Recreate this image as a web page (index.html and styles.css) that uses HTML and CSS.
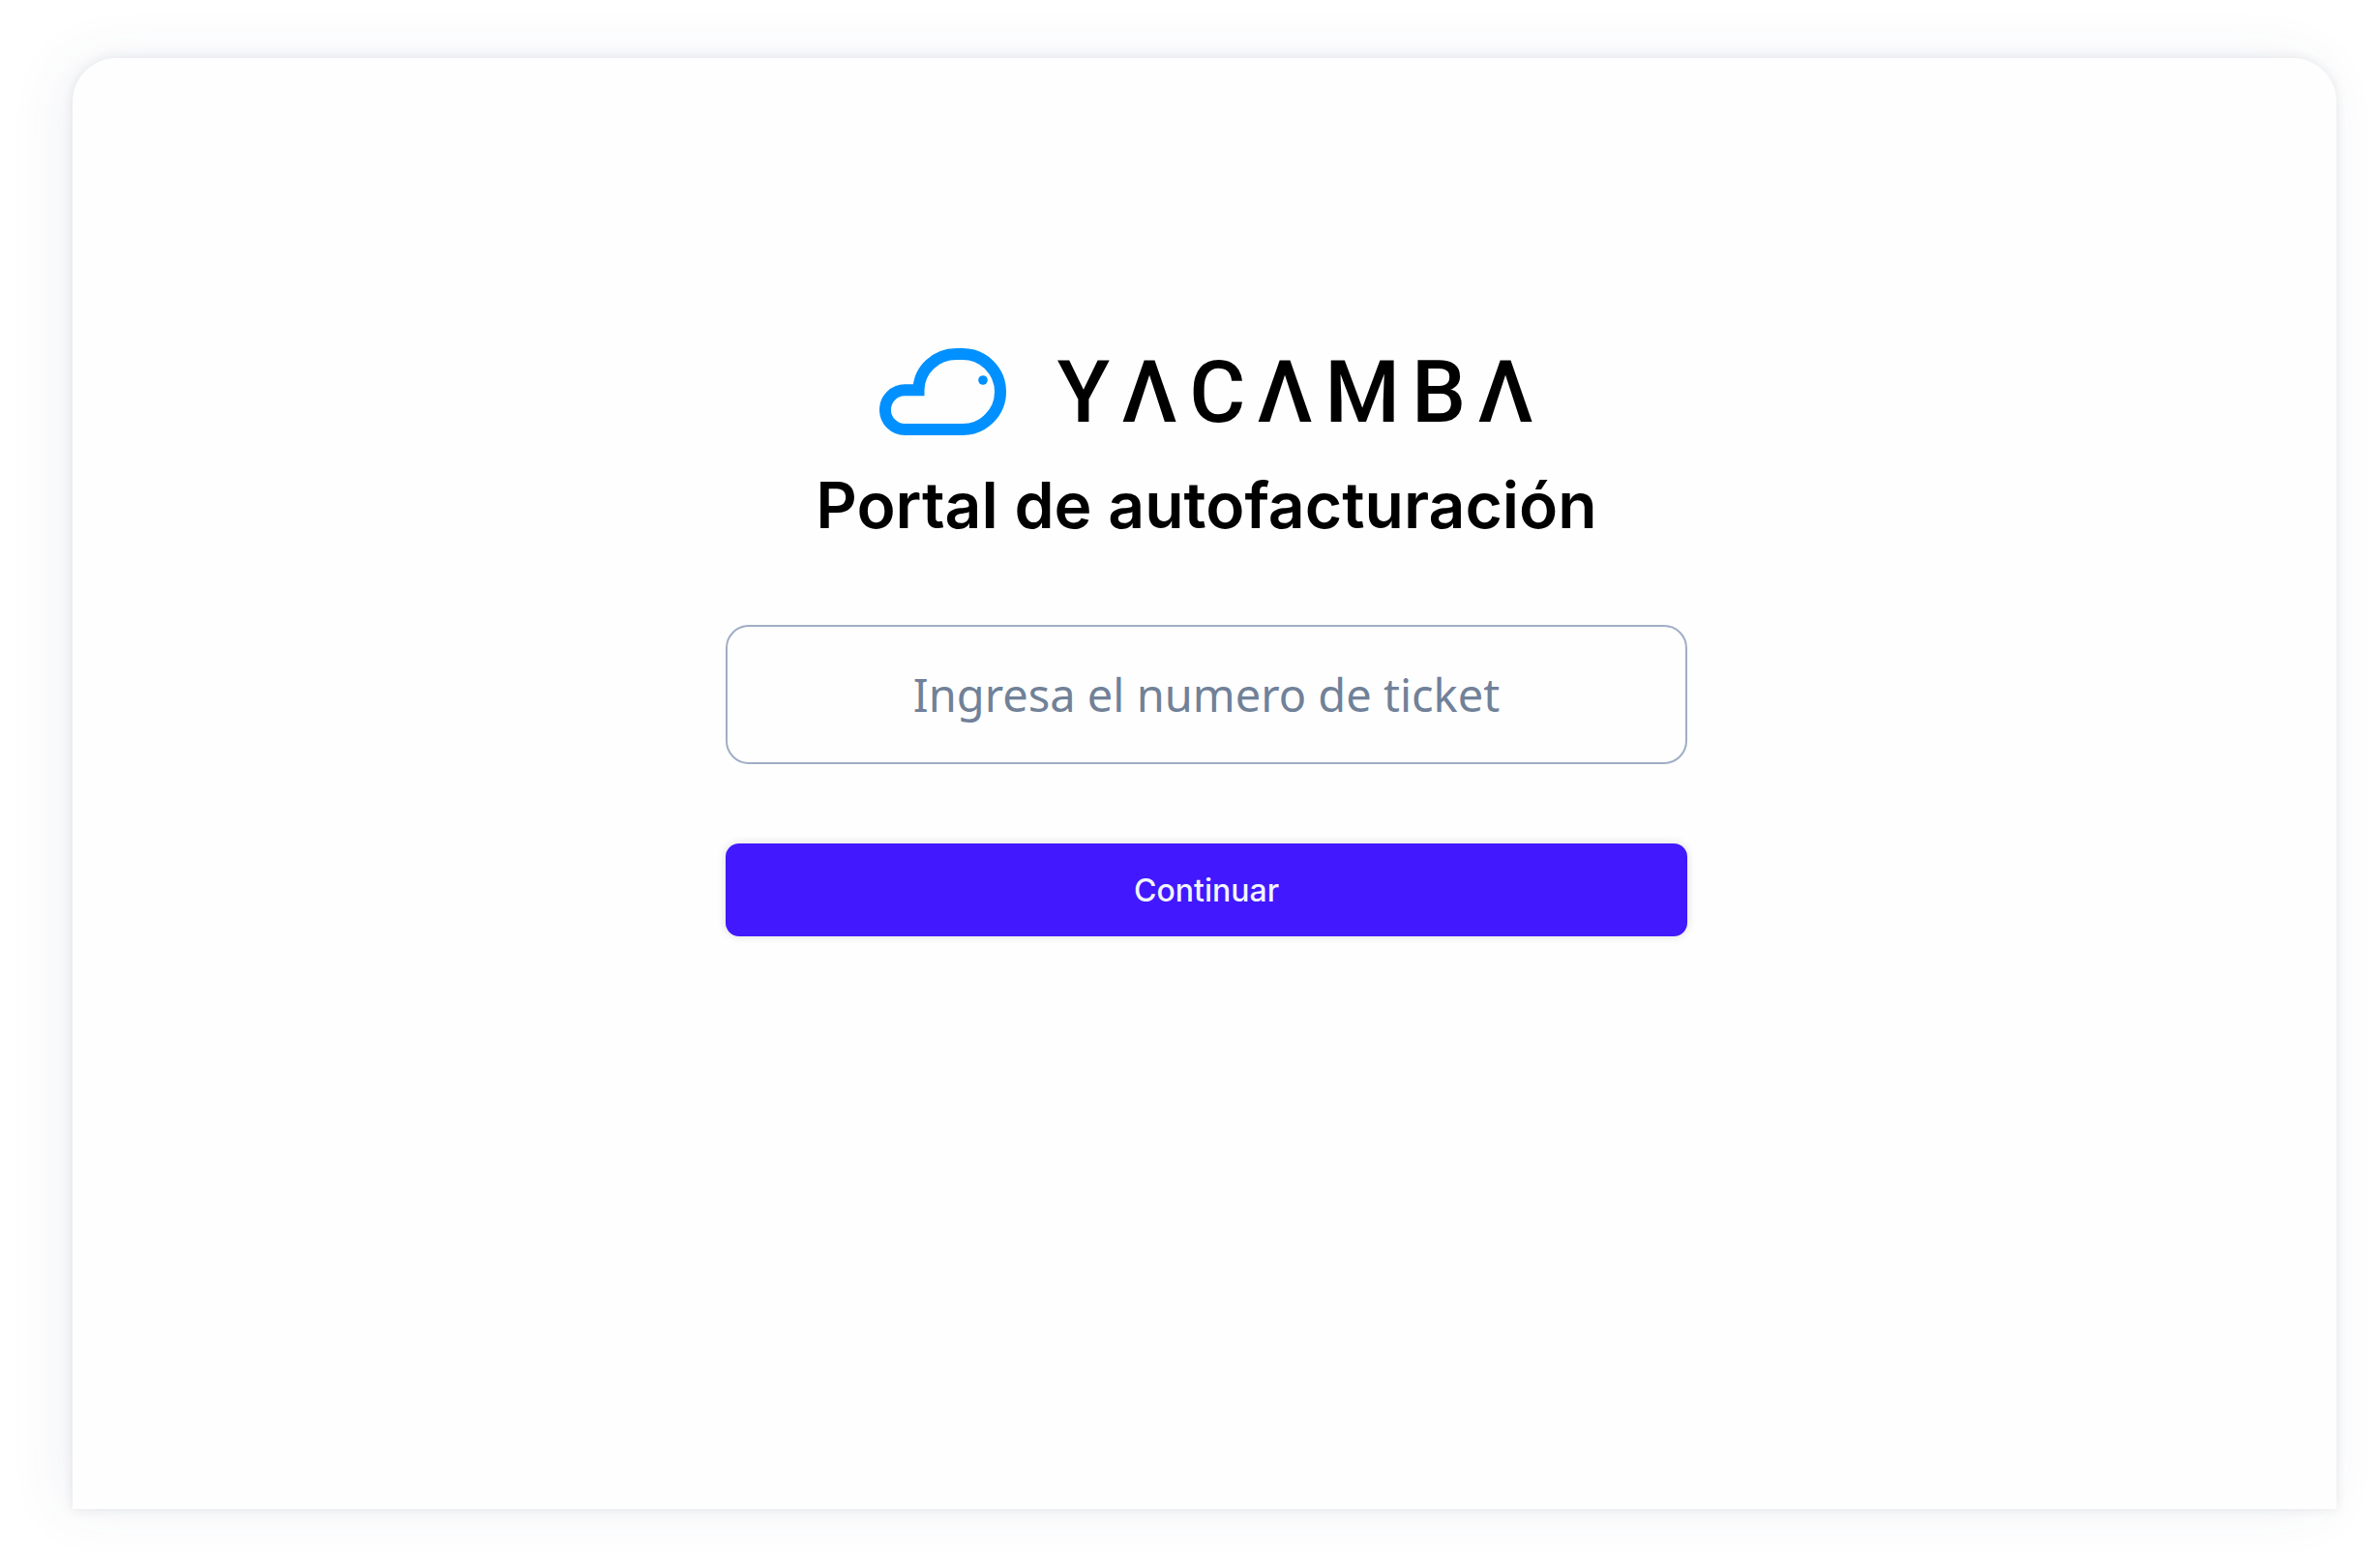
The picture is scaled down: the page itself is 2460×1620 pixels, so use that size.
FILE: index.html
```html
<!DOCTYPE html>
<html lang="es">
<head>
<meta charset="utf-8">
<meta name="viewport" content="width=device-width, initial-scale=1">
<title>Portal de autofacturación</title>
<link rel="stylesheet" href="styles.css">
</head>
<body>
<main class="card">
  <div class="brand">
    <svg class="brand-icon" viewBox="0 0 132 90" fill="none" aria-hidden="true">
      <path d="M40.5 43.3A39 37.5 0 0 1 79.5 6H86A39 39 0 0 1 86 84H26.3A20.3 20.3 0 0 1 26.3 43.3Z" stroke="currentColor" stroke-width="12"/>
      <circle cx="107" cy="33" r="4.8" fill="currentColor"/>
    </svg>
    <span class="brand-name">YΛCΛMBΛ</span>
  </div>
  <h1 class="title">Portal de autofacturación</h1>
  <form class="ticket-form">
    <input class="ticket-input" type="text" name="ticket" aria-label="Numero de ticket" placeholder="Ingresa el numero de ticket">
    <button class="submit" type="submit">Continuar</button>
  </form>
</main>
</body>
</html>
```
FILE: styles.css
```css
* {
  box-sizing: border-box;
}

body {
  margin: 0;
  min-height: 100vh;
  padding: 60px 45px 60px 75px;
  display: flex;
  background: #fff;
  font-family: Inter, "Liberation Sans", sans-serif;
}

.card {
  flex: 1;
  display: flex;
  flex-direction: column;
  align-items: center;
  padding: 292px 24px 48px 28px;
  border-radius: 45px 45px 0 0;
  background: #fefefe;
  box-shadow: 0 0 12px rgba(30, 35, 60, 0.1), -12px 0 60px rgba(50, 70, 130, 0.07);
}

.brand {
  display: flex;
  align-items: center;
  gap: 52px;
}

.brand-icon {
  width: 132px;
  height: 90px;
  color: #0090ff;
}

.brand-name {
  padding-top: 2px;
  font-family: Roboto, sans-serif;
  font-size: 89px;
  font-weight: 500;
  line-height: 104px;
  letter-spacing: 12px;
  margin-right: -12px;
  color: #000;
}

.title {
  margin: 24px 0 0;
  font-size: 66px;
  font-weight: 600;
  line-height: 80px;
  text-align: center;
  color: #000;
}

.ticket-form {
  width: 100%;
  max-width: 994px;
  margin-top: 84px;
  display: flex;
  flex-direction: column;
  gap: 82px;
}

.ticket-input {
  width: 100%;
  height: 144px;
  padding: 0 32px;
  border: 2px solid #a0aec4;
  border-radius: 24px;
  background: #fefefe;
  font-family: "Noto Sans", sans-serif;
  font-size: 47px;
  text-align: center;
  color: #1e293b;
}

.ticket-input::placeholder {
  color: #718198;
  opacity: 1;
}

.submit {
  height: 96px;
  border: 0;
  border-radius: 14px;
  background: #4218ff;
  box-shadow: 0 0 10px rgba(0, 0, 0, 0.14);
  font-family: inherit;
  font-size: 32px;
  font-weight: 500;
  color: #f1f5ff;
}
```
